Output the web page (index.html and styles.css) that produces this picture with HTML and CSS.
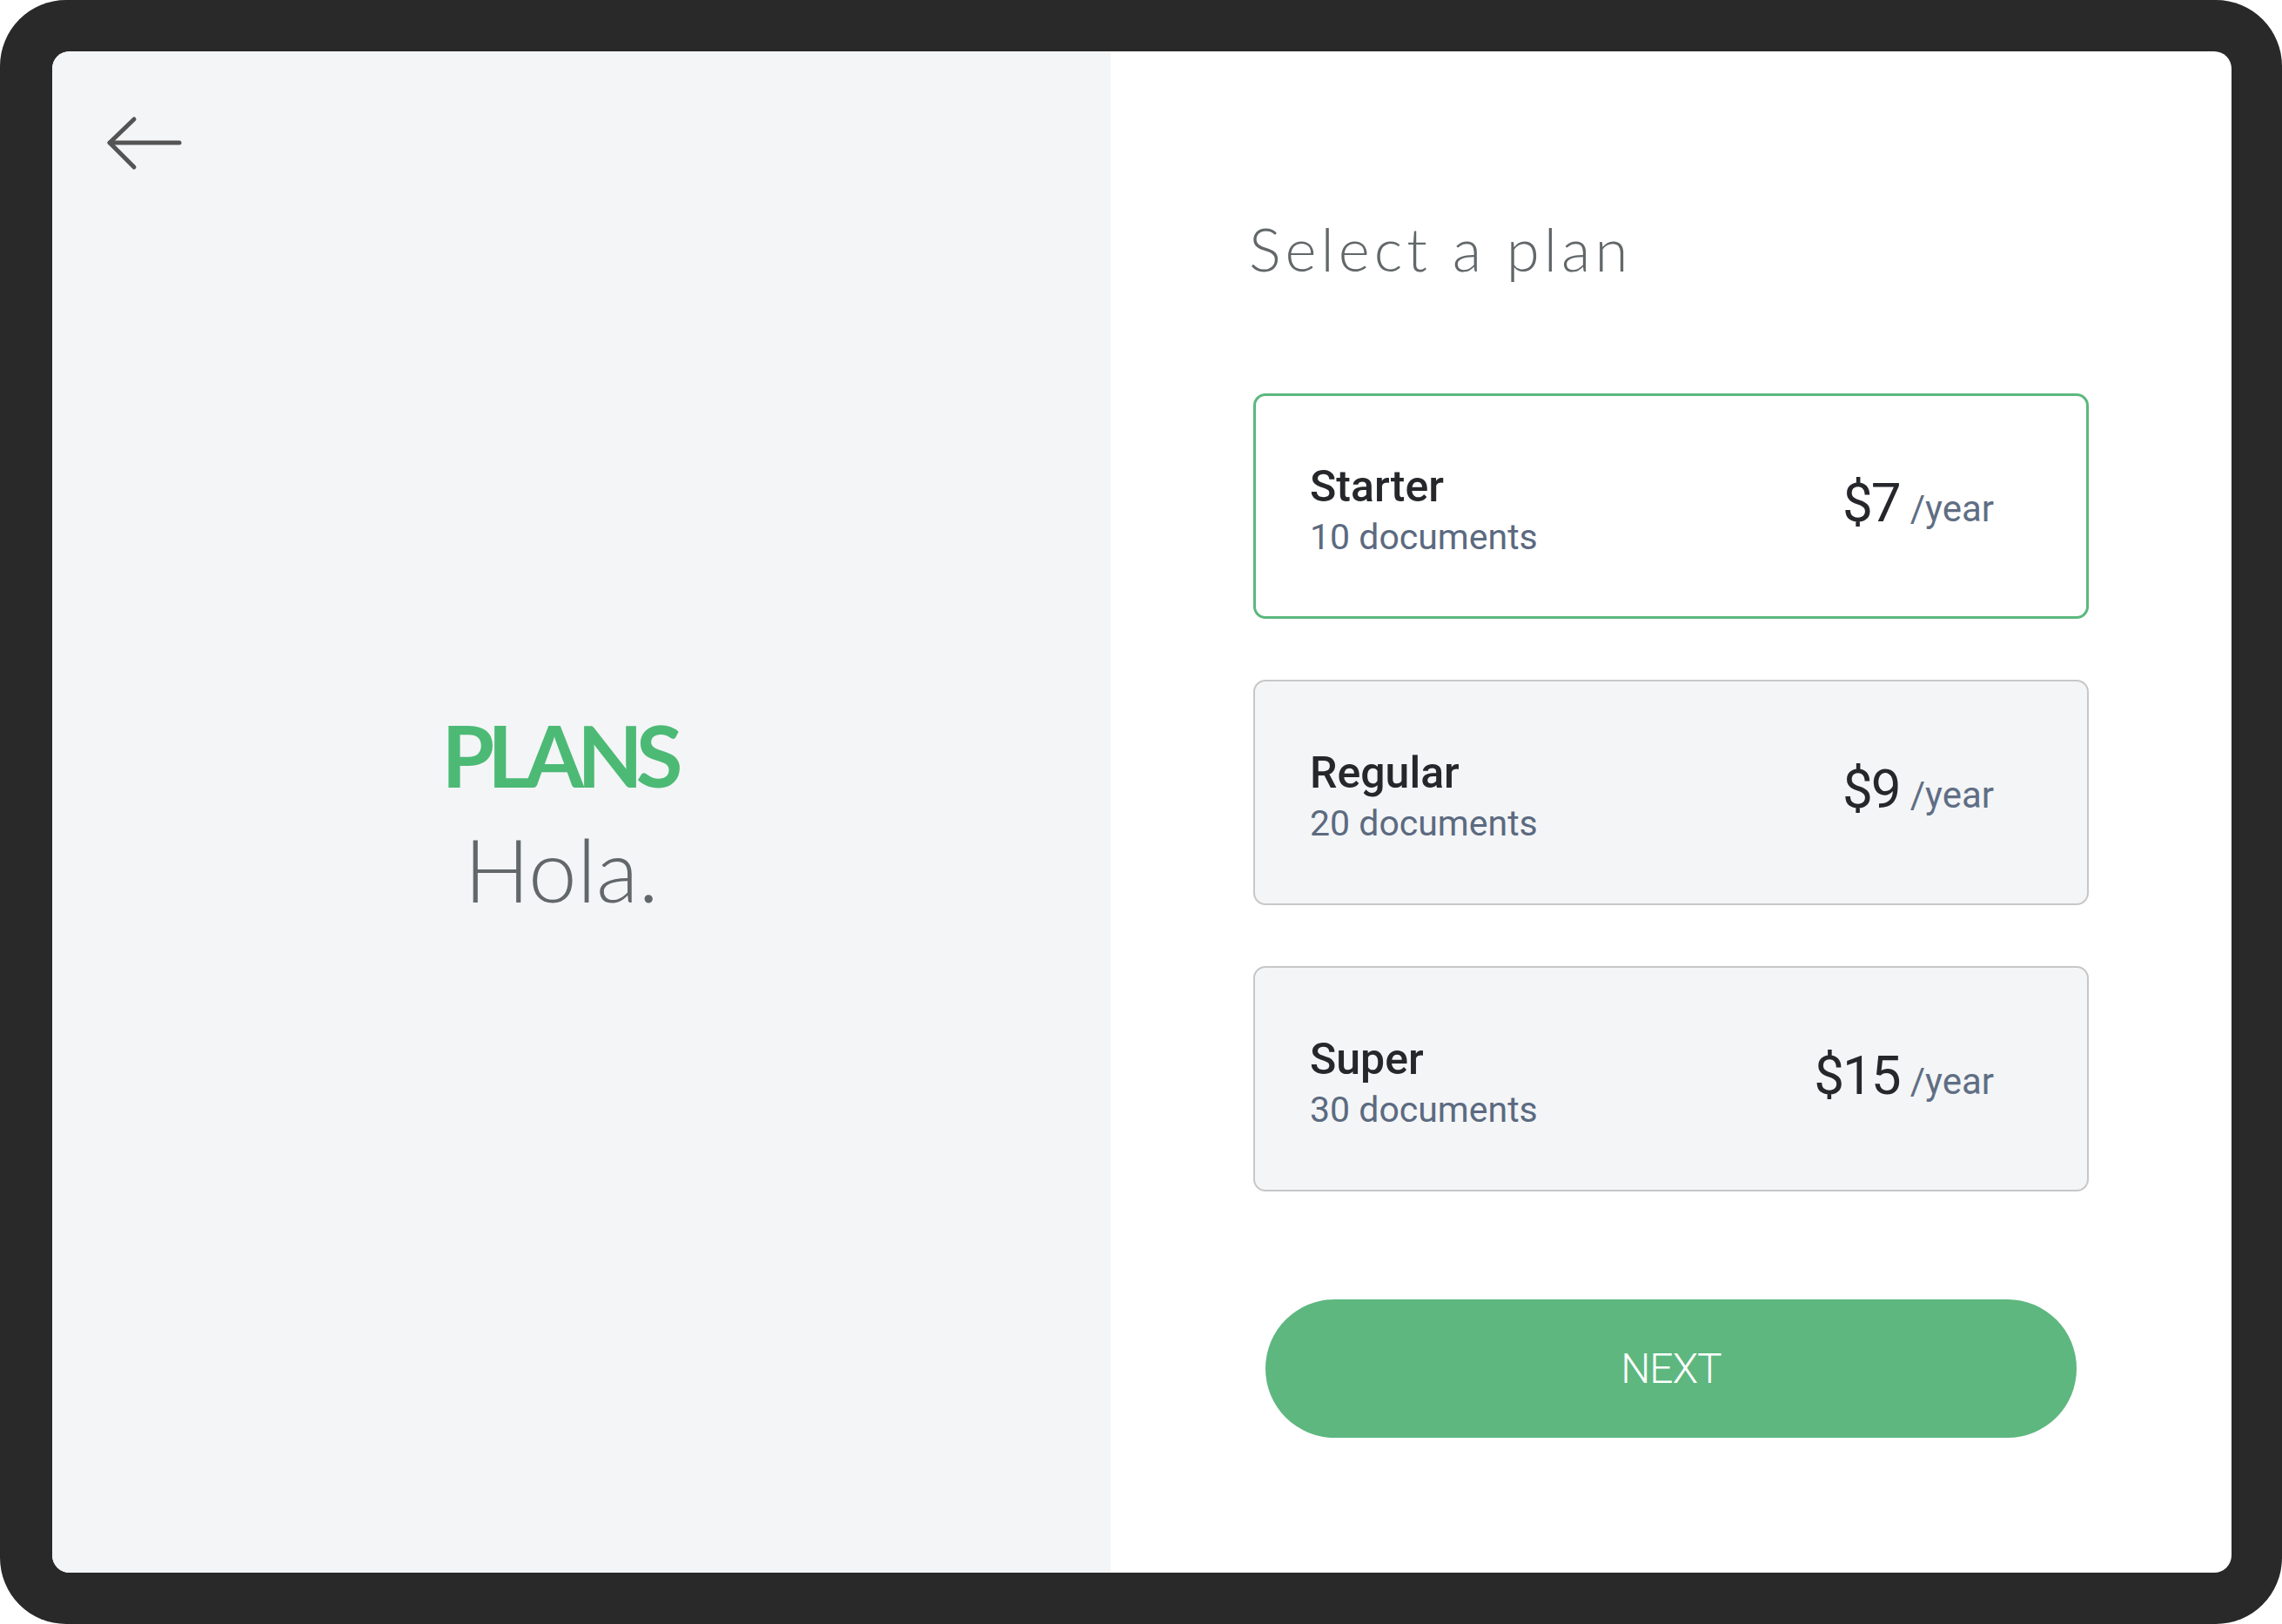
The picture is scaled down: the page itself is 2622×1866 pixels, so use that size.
FILE: index.html
```html
<!DOCTYPE html>
<html lang="en">
<head>
<meta charset="utf-8">
<title>Select a plan</title>
<link rel="stylesheet" href="styles.css">
</head>
<body>
<div class="device">
  <div class="screen">
    <section class="intro">
      <button class="back" aria-label="Back">
        <svg width="90" height="64" viewBox="0 0 90 64" fill="none" stroke="#545454" stroke-width="5" stroke-linecap="round" stroke-linejoin="round">
          <path d="M85 32H5"/>
          <path d="M33 5L5 32L33 60"/>
        </svg>
      </button>
      <div class="hero">
        <div class="hero-title">PLANS</div>
        <div class="hero-sub">Hola.</div>
      </div>
      <div class="spacer"></div>
    </section>
    <section class="content">
      <div class="column">
        <h1 class="title">Select a plan</h1>
        <div class="plans">
          <div class="plan selected">
            <div class="plan-info">
              <div class="plan-name">Starter</div>
              <div class="plan-docs">10 documents</div>
            </div>
            <div class="plan-price"><span class="amount">$7</span><span class="period">/year</span></div>
          </div>
          <div class="plan">
            <div class="plan-info">
              <div class="plan-name">Regular</div>
              <div class="plan-docs">20 documents</div>
            </div>
            <div class="plan-price"><span class="amount">$9</span><span class="period">/year</span></div>
          </div>
          <div class="plan">
            <div class="plan-info">
              <div class="plan-name">Super</div>
              <div class="plan-docs">30 documents</div>
            </div>
            <div class="plan-price"><span class="amount">$15</span><span class="period">/year</span></div>
          </div>
        </div>
        <button class="next">NEXT</button>
      </div>
    </section>
  </div>
</div>
</body>
</html>
```

FILE: styles.css
```css
* { box-sizing: border-box; }

html, body {
  margin: 0;
  padding: 0;
  background: #ffffff;
}

.device {
  width: 2622px;
  height: 1866px;
  background: #292929;
  border-radius: 76px;
  padding: 59px 58px 59px 60px;
}

.screen {
  width: 100%;
  height: 100%;
  border-radius: 20px;
  overflow: hidden;
  display: grid;
  grid-template-columns: 1216px 1fr;
  background: #ffffff;
}

/* Left panel */
.intro {
  background: #f4f5f7;
  display: grid;
  grid-template-rows: 1fr auto 1fr;
  padding-right: 46px;
}

.back {
  align-self: start;
  justify-self: start;
  margin: 73px 0 0 61px;
  padding: 0;
  border: 0;
  background: transparent;
  width: 90px;
  height: 64px;
  display: block;
  cursor: pointer;
}

.back svg { display: block; }

.hero {
  text-align: center;
  font-family: "Lato", "Noto Sans", sans-serif;
}

.hero-title {
  font-size: 98px;
  line-height: 131px;
  font-weight: 700;
  color: #4cba75;
  letter-spacing: -8px;
  padding-right: 6px;
}

.hero-sub {
  font-size: 100px;
  line-height: 131px;
  font-weight: 300;
  color: #62676a;
}

/* Right panel */
.content {
  padding-top: 187px;
}

.column {
  width: 960px;
  margin: 0 auto;
}

.title {
  margin: 0 0 126px -5px;
  font-family: "Lato", "Noto Sans", sans-serif;
  font-weight: 300;
  font-size: 69px;
  line-height: 80px;
  letter-spacing: 5px;
  color: #626769;
}

.plans {
  display: flex;
  flex-direction: column;
  gap: 70px;
}

.plan {
  height: 259px;
  border: 2px solid #c7c7c7;
  border-radius: 14px;
  background: #f4f5f7;
  display: flex;
  align-items: center;
  justify-content: space-between;
  padding: 0 107px 0 63px;
  font-family: "Roboto", "Noto Sans", sans-serif;
}

.plan.selected {
  border: 3px solid #5cb87e;
  background: #ffffff;
  padding: 0 106px 0 62px;
}

.plan-info {
  margin-top: 12px;
}

.plan-name {
  font-size: 50px;
  line-height: 58px;
  font-weight: 500;
  color: #25272b;
}

.plan-docs {
  font-size: 41px;
  line-height: 58px;
  font-weight: 400;
  color: #5b6a80;
}

.plan-price {
  margin-bottom: 8px;
  white-space: nowrap;
  line-height: 1;
}

.amount {
  font-size: 62px;
  font-weight: 400;
  color: #25272b;
  letter-spacing: -2px;
}

.period {
  margin-left: 12px;
  font-size: 42px;
  font-weight: 400;
  color: #5f6e84;
}

.next {
  display: flex;
  align-items: center;
  justify-content: center;
  width: 932px;
  height: 159px;
  margin: 124px auto 0;
  border: 0;
  border-radius: 80px;
  background: #5db77f;
  color: #ffffff;
  font-family: "Roboto", "Noto Sans", sans-serif;
  font-weight: 300;
  font-size: 48px;
  letter-spacing: -1px;
  cursor: pointer;
}
```
